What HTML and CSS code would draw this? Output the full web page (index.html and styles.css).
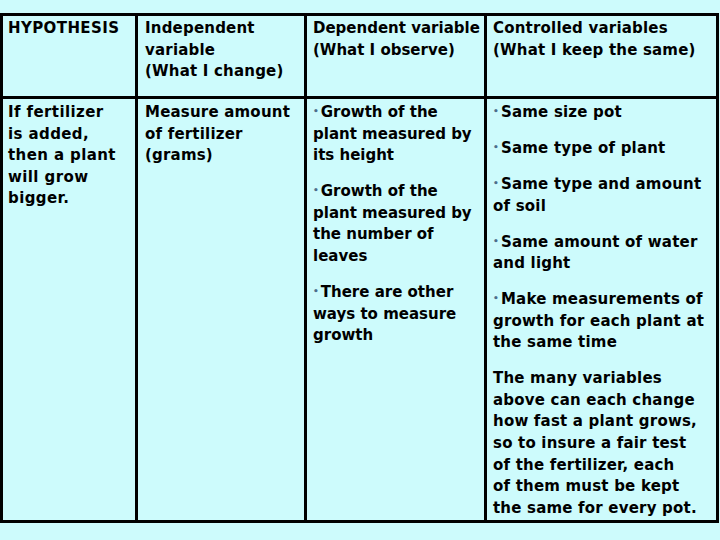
FILE: index.html
```html
<!DOCTYPE html>
<html>
<head>
<meta charset="utf-8">
<link rel="stylesheet" href="styles.css">
</head>
<body>
<div class="table">
  <div class="cell c1 head"><p>HYPOTHESIS</p></div>
  <div class="cell c2 head"><p>Independent<br>variable<br>(What I change)</p></div>
  <div class="cell c3 head"><p>Dependent variable<br>(What I observe)</p></div>
  <div class="cell c4 head"><p>Controlled variables<br>(What I keep the same)</p></div>

  <div class="cell c1 body"><p>If fertilizer<br>is added,<br>then a plant<br>will grow<br>bigger.</p></div>
  <div class="cell c2 body"><p>Measure amount<br>of fertilizer<br>(grams)</p></div>
  <div class="cell c3 body">
    <p><span class="dot">•</span>Growth of the<br>plant measured by<br>its height</p>
    <p><span class="dot">•</span>Growth of the<br>plant measured by<br>the number of<br>leaves</p>
    <p><span class="dot">•</span>There are other<br>ways to measure<br>growth</p>
  </div>
  <div class="cell c4 body">
    <p><span class="dot">•</span>Same size pot</p>
    <p><span class="dot">•</span>Same type of plant</p>
    <p><span class="dot">•</span>Same type and amount<br>of soil</p>
    <p><span class="dot">•</span>Same amount of water<br>and light</p>
    <p><span class="dot">•</span>Make measurements of<br>growth for each plant at<br>the same time</p>
    <p>The many variables<br>above can each change<br>how fast a plant grows,<br>so to insure a fair test<br>of the fertilizer, each<br>of them must be kept<br>the same for every pot.</p>
  </div>
</div>
</body>
</html>
```
FILE: styles.css
```css
html, body {
  margin: 0;
  padding: 0;
  background: #cdfbfc;
}
body {
  width: 720px;
  height: 540px;
  overflow: hidden;
  font-family: "DejaVu Sans", "Liberation Sans", sans-serif;
  font-weight: bold;
  font-size: 15px;
  line-height: 21.6px;
  color: #000;
}
.table {
  margin-top: 13px;
  width: 719px;
  box-sizing: border-box;
  display: grid;
  grid-template-columns: 132px 166px 177px 229px;
  grid-template-rows: 80px 421px;
  gap: 3px;
  padding: 3px;
  background: #000;
}
.cell {
  background: #cdfbfc;
  display: flex;
  flex-direction: column;
  gap: 14.4px;
  white-space: nowrap;
  letter-spacing: 0.2px;
}
.cell p {
  margin: 0;
}
.head {
  padding-top: 2px;
}
.body {
  padding-top: 3px;
}
.c1 { padding-left: 5px; letter-spacing: 0.4px; }
.c2 { padding-left: 7px; }
.c3 { padding-left: 6px; letter-spacing: 0; }
.c4 { padding-left: 6px; }
.dot {
  color: #4d6e8c;
  font-size: 9px;
  line-height: 0;
  vertical-align: 3px;
  margin-right: 2px;
}
```
